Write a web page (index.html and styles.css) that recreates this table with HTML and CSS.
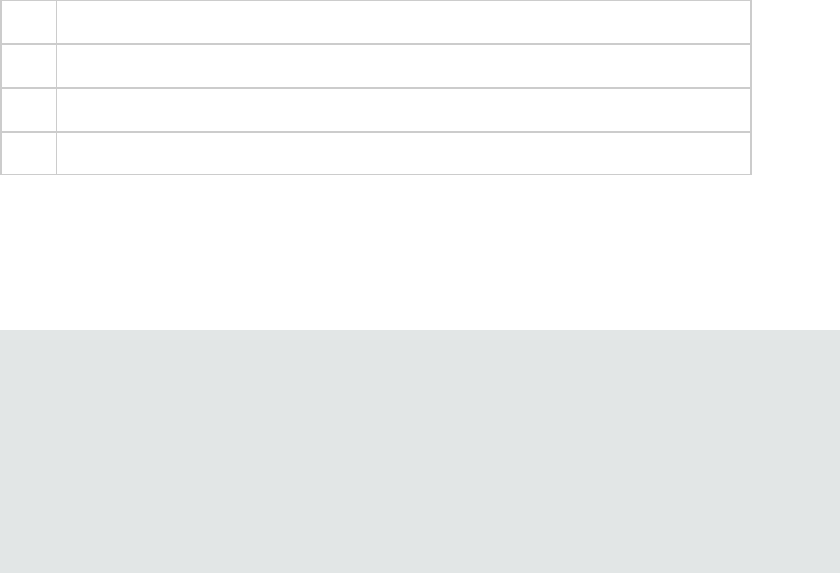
FILE: index.html
```html
<!DOCTYPE html>
<html lang="en">
<head>
  <meta charset="UTF-8" />
  <meta name="viewport" content="width=device-width, initial-scale=1.0" />
  <title>Table</title>
  <link rel="stylesheet" href="styles.css">
</head>
<body>
  <!-- Пустая таблица -->
  <div class="grid-table">
    <div class="row"><div class="cell num"></div><div class="cell"></div></div>
    <div class="row"><div class="cell num"></div><div class="cell"></div></div>
    <div class="row"><div class="cell num"></div><div class="cell"></div></div>
    <div class="row"><div class="cell num"></div><div class="cell"></div></div>
  </div>

  <!-- Серый подвал -->
  <footer class="footer-panel"></footer>
</body>
</html>
```

FILE: styles.css
```css
:root {
  --line-color: #cccccc;
  --panel-color: #e2e6e6;
}
* {
  box-sizing: border-box;
}
body {
  margin: 0;
  font-family: 'Liberation Sans', Arial, sans-serif;
  background: #fff;
}
/* Таблица */
.grid-table {
  width: 752px;
  border-top: 1px solid var(--line-color);
  border-left: 2px solid var(--line-color);
  border-right: 2px solid var(--line-color);
  border-bottom: 1px solid var(--line-color);
}
.row {
  display: flex;
  height: 44px;
  border-bottom: 2px solid var(--line-color);
}
.row:last-child {
  height: 41px;
  border-bottom: none;
}
.cell {
  flex: 1;
}
.cell.num {
  flex: 0 0 55px;
  border-right: 1px solid var(--line-color);
}
/* Нижняя панель */
.footer-panel {
  margin-top: 155px;
  height: 243px;
  background: var(--panel-color);
}
```
